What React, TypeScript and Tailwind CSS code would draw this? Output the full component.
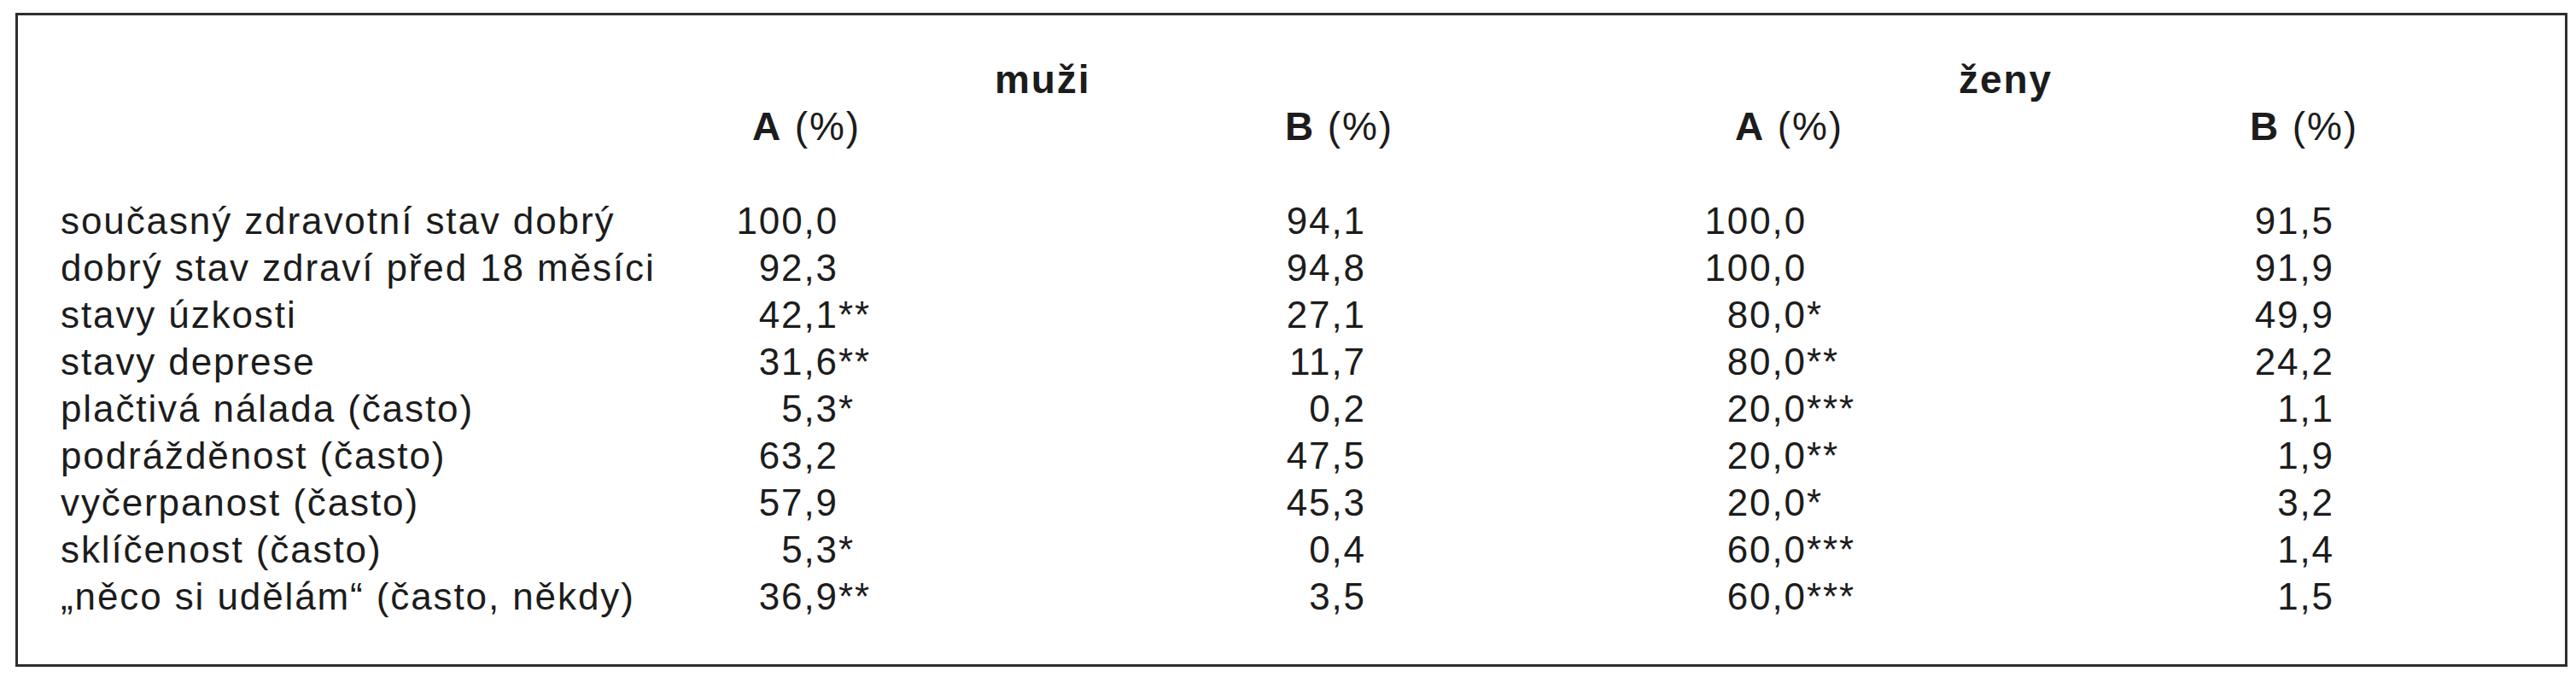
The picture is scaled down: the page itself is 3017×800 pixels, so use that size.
type Value = { n: string; s?: string };

const rows: { label: string; v: Value[] }[] = [
    { label: 'současný zdravotní stav dobrý', v: [{ n: '100,0' }, { n: '94,1' }, { n: '100,0' }, { n: '91,5' }] },
    { label: 'dobrý stav zdraví před 18 měsíci', v: [{ n: '92,3' }, { n: '94,8' }, { n: '100,0' }, { n: '91,9' }] },
    { label: 'stavy úzkosti', v: [{ n: '42,1', s: '**' }, { n: '27,1' }, { n: '80,0', s: '*' }, { n: '49,9' }] },
    { label: 'stavy deprese', v: [{ n: '31,6', s: '**' }, { n: '11,7' }, { n: '80,0', s: '**' }, { n: '24,2' }] },
    { label: 'plačtivá nálada (často)', v: [{ n: '5,3', s: '*' }, { n: '0,2' }, { n: '20,0', s: '***' }, { n: '1,1' }] },
    { label: 'podrážděnost (často)', v: [{ n: '63,2' }, { n: '47,5' }, { n: '20,0', s: '**' }, { n: '1,9' }] },
    { label: 'vyčerpanost (často)', v: [{ n: '57,9' }, { n: '45,3' }, { n: '20,0', s: '*' }, { n: '3,2' }] },
    { label: 'sklíčenost (často)', v: [{ n: '5,3', s: '*' }, { n: '0,4' }, { n: '60,0', s: '***' }, { n: '1,4' }] },
    { label: '„něco si udělám“ (často, někdy)', v: [{ n: '36,9', s: '**' }, { n: '3,5' }, { n: '60,0', s: '***' }, { n: '1,5' }] },
];

function ColHead({ letter }: { letter: string }) {
    return (
        <>
            <span className="font-bold">{letter}</span> (%)
        </>
    );
}

export default function App() {
    return (
        <div className="min-h-screen bg-white pt-[15px] pl-[18px] font-['Liberation_Sans',Arial,sans-serif] text-[#1c1c1c] tracking-[1.9px]">
            <div className="w-[2989px] h-[766px] border-[3px] border-[#2e2e2e] pt-[48px]">
                {/* group headers */}
                <div className="flex text-[46px] leading-[55px] font-bold">
                    <div className="w-[1144px]" />
                    <div className="w-[1129px]">muži</div>
                    <div>ženy</div>
                </div>
                {/* column headers */}
                <div className="flex text-[46px] leading-[55px]">
                    <div className="w-[860px]" />
                    <div className="w-[624px]"><ColHead letter="A" /></div>
                    <div className="w-[527px]"><ColHead letter="B" /></div>
                    <div className="w-[603px]"><ColHead letter="A" /></div>
                    <div><ColHead letter="B" /></div>
                </div>
                <div className="h-[55px]" />
                {/* data rows */}
                <div className="grid grid-cols-[799px_162px_468px_150px_350px_166px_464px_154px_1fr] text-[44px] leading-[55px]">
                    {rows.map((r) => (
                        <div key={r.label} className="contents">
                            <div className="pl-[50px] whitespace-nowrap">{r.label}</div>
                            {r.v.map((val, i) => (
                                <div key={i} className="contents">
                                    <div className="text-right">{val.n}</div>
                                    <div className="text-left whitespace-nowrap">{val.s ?? ''}</div>
                                </div>
                            ))}
                        </div>
                    ))}
                </div>
            </div>
        </div>
    );
}
